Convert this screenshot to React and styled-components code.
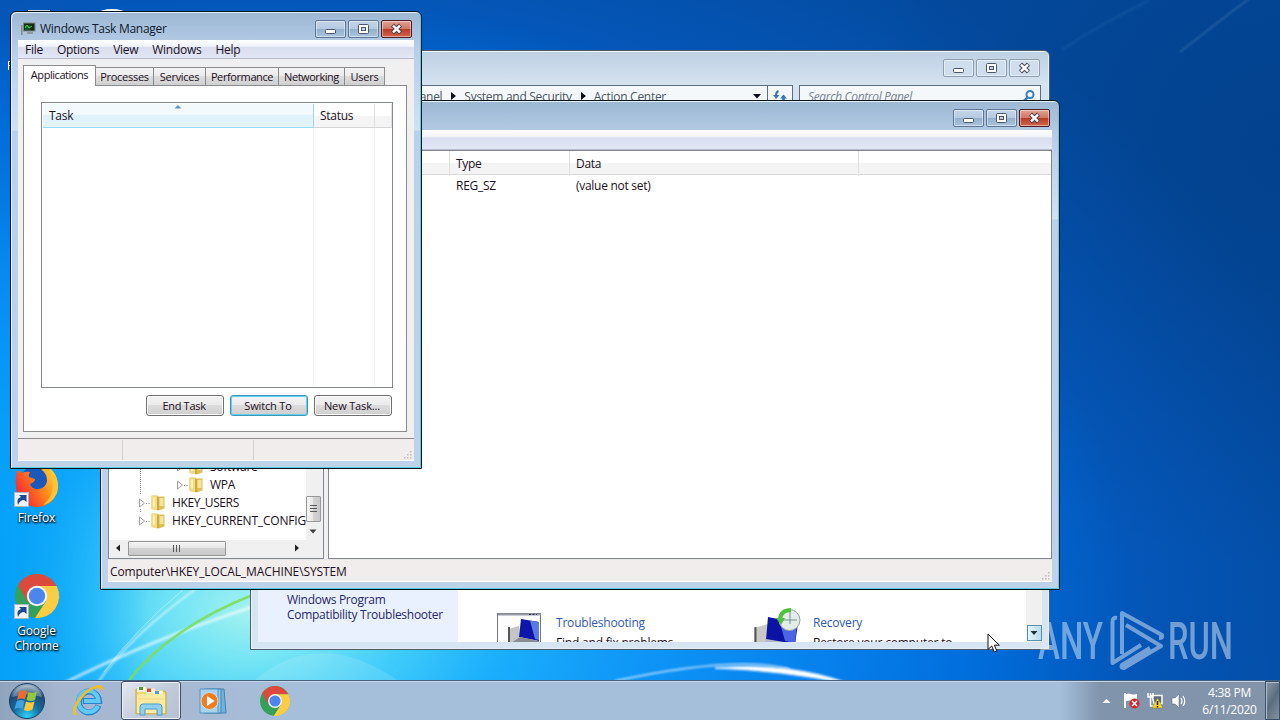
import React from 'react';
import styled, { createGlobalStyle, css } from 'styled-components';

const GlobalStyle = createGlobalStyle`
  * {
    box-sizing: border-box;
  }
  body {
    margin: 0;
    overflow: hidden;
    font-family: 'Open Sans', 'Noto Sans', sans-serif;
    font-size: 12px;
    letter-spacing: -0.28px;
    color: #1c1022;
  }
  svg {
    flex: none;
  }
`

const Desktop = styled.main`
  position: relative;
  display: flex;
  flex-direction: column;
  justify-content: flex-end;
  width: 1280px;
  height: 720px;
  overflow: hidden;
  background:
    radial-gradient(ellipse 420px 420px at 1280px 150px, rgba(0, 40, 90, 0.25), transparent),
    radial-gradient(ellipse 170px 420px at -20px 620px, rgba(0, 158, 248, 0.95), rgba(0, 158, 248, 0.6) 50%, transparent),
    radial-gradient(ellipse 1120px 780px at 250px 610px, #a4f2f0 0%, #78e6f4 6%, #40ccfa 14%, #1aaefc 23%, #0e94f6 36%, #0680ec 52%, #006cda 66%, #0456b8 79%, #034a9e 100%);
`

const Wallpaper = styled.svg`
  position: absolute;
  left: 0;
  top: 0;
`

/* ---- window chrome ---- */

const Window = styled.section`
  position: absolute;
  left: ${props => props.$x}px;
  top: ${props => props.$y}px;
  width: ${props => props.$w}px;
  height: ${props => props.$h}px;
  display: flex;
  flex-direction: column;
  padding: 0 7px 7px;
  border: 1px solid ${props => props.$active ? '#06121c' : '#4c5c6c'};
  border-radius: 6px 6px 0 0;
  background: linear-gradient(#9db8d4, #b9cfe8 40px, #cfe2f3 118px, #b9d1ea 119px, #bed2ea);
  box-shadow: inset 1px 1px 0 #e6f2fb, inset -1px -1px 0 #57d0e4;
  ${props => !props.$active && css`
    background: linear-gradient(#bdd0e2, #d6e3f0 34px, #d7e4f2);
    box-shadow: inset 1px 1px 0 #f1f6fb, inset -1px -1px 0 #e3edf6;
  `}
`

const TitleBar = styled.header`
  display: flex;
  align-items: flex-start;
  flex: none;
  height: ${props => props.$h}px;
  margin-right: -5px;
  padding: 8px 7px 0 2px;
`

const Caption = styled.div`
  display: flex;
  align-items: center;
  flex: 1;
  height: 17px;
  gap: 4px;
  color: #0d1a2c;
`

const Controls = styled.div`
  display: flex;
  gap: 2px;
`

const ControlButton = styled.div`
  display: flex;
  align-items: center;
  justify-content: center;
  width: 31px;
  height: 18px;
  border: 1px solid #5d7796;
  border-radius: 2px;
  background: linear-gradient(#c3d5e9, #b5cae1 48%, #93afcb 50%, #a9c4de);
  box-shadow: inset 0 0 0 1px rgba(255, 255, 255, 0.45);
  ${props => props.$close && css`
    border-color: #4d1c22;
    background: linear-gradient(#e2a294, #d27762 48%, #b93a24 50%, #d2644a);
  `}
  ${props => props.$faded && css`
    border-color: #8d9eb1;
    background: #cfdeec;
  `}
`

const Min = () => (
  <svg width="13" height="12"><rect x="1.5" y="6.5" width="10" height="4" rx="1" fill="#fff" stroke="#4b5766" /></svg>
)

const Max = () => (
  <svg width="13" height="12">
    <rect x="1.5" y="1.5" width="10" height="9" rx="1" fill="#fff" stroke="#4b5766" />
    <rect x="4.5" y="4.5" width="4" height="3" fill="#c5d3e2" stroke="#4b5766" />
  </svg>
)

const Close = () => (
  <svg width="13" height="12">
    <path d="M2.5 2.2 L10.5 9.8 M10.5 2.2 L2.5 9.8" stroke="#4b4450" strokeWidth="4.4" />
    <path d="M3 2.7 L10 9.3 M10 2.7 L3 9.3" stroke="#fff" strokeWidth="2.5" />
  </svg>
)

const WindowControls = ({ faded }) => (
  <Controls>
    <ControlButton $faded={faded}><Min /></ControlButton>
    <ControlButton $faded={faded}><Max /></ControlButton>
    <ControlButton $faded={faded} $close={!faded}><Close /></ControlButton>
  </Controls>
)

const MenuBar = styled.nav`
  display: flex;
  flex: none;
  height: ${props => props.$h}px;
  padding-left: 7px;
  gap: 14px;
  line-height: 19px;
  border-bottom: 1px solid #b6bccc;
  background: linear-gradient(#fff, #f0f3fa 35%, #d9deef 42%, #e2e6f5);
`

const StatusBar = styled.footer`
  display: flex;
  align-items: center;
  flex: none;
  position: relative;
  height: 23px;
  border-top: 1px solid ${props => props.$line || '#8b8b8b'};
  border-bottom: 1px solid #fff;
  background: #f1edec;
`

const StatusCell = styled.div`
  width: ${props => props.$w}px;
  height: 20px;
  border-right: 1px solid #cfcfcf;
`

const Grip = styled.svg`
  position: absolute;
  right: 1px;
  bottom: 0;
`

const ResizeGrip = () => (
  <Grip width="9" height="9" fill="#c2c0c0">
    <path d="M6 0h1.500v1.500h-1.500zM3 3h1.500v1.500h-1.500zM6 3h1.500v1.500h-1.500zM0 6h1.500v1.500h-1.500zM3 6h1.500v1.500h-1.500zM6 6h1.500v1.500h-1.500z" />
  </Grip>
)

/* ---- task manager ---- */

const TaskBody = styled.div`
  display: flex;
  flex-direction: column;
  flex: 1;
  padding: 6px 7px 6px 5px;
  background: #f0f0f0;
`

const Tabs = styled.div`
  display: flex;
  align-items: flex-end;
  height: 21px;
  margin-bottom: -1px;
  z-index: 1;
  font-size: 11px;
`

const Tab = styled.div`
  width: ${props => props.$w}px;
  height: 19px;
  line-height: 18px;
  text-align: center;
  white-space: nowrap;
  letter-spacing: ${props => props.$track || -0.28}px;
  border: 1px solid #8a8c90;
  border-left: none;
  background: linear-gradient(#f3f3f3, #ebebeb 48%, #dcdcdc 50%, #d0d0d0);
  ${props => props.$current && css`
    height: 21px;
    border-left: 1px solid #8a8c90;
    border-bottom: none;
    background: #fff;
  `}
`

const TabPanel = styled.div`
  display: flex;
  flex-direction: column;
  flex: 1;
  padding: 16px 14px 15px 17px;
  border: 1px solid #8a8c90;
  background: #fff;
`

const TaskList = styled.div`
  display: flex;
  width: 352px;
  height: 286px;
  padding: 1px;
  border: 1px solid #828790;
`

const ListColumn = styled.div`
  flex: none;
  width: ${props => props.$w}px;
  border-right: 1px solid #f1f1f1;
  &:last-child {
    border-right: none;
  }
`

const ColumnHead = styled.div`
  position: relative;
  height: 24px;
  margin-right: -1px;
  padding-left: 6px;
  line-height: 24px;
  border-right: 1px solid #e0e0e3;
  border-bottom: 1px solid #d6d6d8;
  background: linear-gradient(#fff 50%, #f4f4f5 52%);
  ${props => props.$sorted && css`
    border-right: 1px solid #96d9f9;
    border-bottom: 1px solid #96d9f9;
    background: linear-gradient(#f2fafe 45%, #dff2fc 50%, #e3f4fd);
  `}
`

const SortMark = styled.svg`
  position: absolute;
  left: 131px;
  top: 0;
`

const Buttons = styled.div`
  display: flex;
  justify-content: flex-end;
  gap: 6px;
  margin-top: 7px;
`

const Button = styled.div`
  width: 78px;
  height: 21px;
  padding-right: 2px;
  line-height: 20px;
  letter-spacing: ${props => props.$track || -0.15}px;
  text-align: center;
  font-size: 11px;
  border: 1px solid ${props => props.$focus ? '#3c98b8' : '#707070'};
  border-radius: 3px;
  background: linear-gradient(#f3f3f3, #ebebeb 48%, #dcdcdc 50%, #cfcfcf);
  box-shadow: inset 0 0 0 1px ${props => props.$focus ? '#5fd0f2' : '#fbfbfb'};
`

const tabs = [
  { title: 'Applications', width: 73, track: -0.45, current: true },
  { title: 'Processes', width: 58 },
  { title: 'Services', width: 52 },
  { title: 'Performance', width: 73, track: -0.4 },
  { title: 'Networking', width: 66, track: -0.45 },
  { title: 'Users', width: 40 },
]

const TaskManager = () => (
  <Window $active $x={10} $y={11} $w={412} $h={458}>
    <TitleBar $h={28}>
      <Caption>
        <svg width="16" height="14">
          <rect x="3.5" y="1" width="11.500" height="8" fill="#16281a" stroke="#7d8a80" />
          <path d="M5 3h5v5h-5z" fill="#0b5a1c" />
          <path d="M5 6l2-3 2 3 3-2" stroke="#4fce4f" fill="none" />
          <path d="M7 10h6v2h-6z" fill="#8d9c98" />
          <path d="M1 3h1.500v10h-1.500z" fill="#7f9088" />
        </svg>
        Windows Task Manager
      </Caption>
      <WindowControls />
    </TitleBar>
    <MenuBar $h={19}>
      {['File', 'Options', 'View', 'Windows', 'Help'].map(item => <span key={item}>{item}</span>)}
    </MenuBar>
    <TaskBody>
      <Tabs>
        {tabs.map(tab => (
          <Tab key={tab.title} $w={tab.width} $track={tab.track} $current={tab.current}>{tab.title}</Tab>
        ))}
      </Tabs>
      <TabPanel>
        <TaskList>
          <ListColumn $w={271}>
            <ColumnHead $sorted>
              Task
              <SortMark width="8" height="5"><path d="M0.5 4.5L4 1l3.500 3.500z" fill="#5f98b8" /></SortMark>
            </ColumnHead>
          </ListColumn>
          <ListColumn $w={61}><ColumnHead>Status</ColumnHead></ListColumn>
          <ListColumn $w={16}><ColumnHead /></ListColumn>
        </TaskList>
        <Buttons>
          <Button $track={-0.3}>End Task</Button>
          <Button $focus>Switch To</Button>
          <Button>New Task...</Button>
        </Buttons>
      </TabPanel>
    </TaskBody>
    <StatusBar>
      <StatusCell $w={105} />
      <StatusCell $w={131} />
      <ResizeGrip />
    </StatusBar>
  </Window>
)

/* ---- registry editor ---- */

const RegBody = styled.div`
  display: flex;
  flex: 1;
  min-height: 0;
  background: #f0f0f0;
`

const TreePane = styled.div`
  display: grid;
  grid-template-columns: 1fr 17px;
  grid-template-rows: 1fr 18px;
  width: 216px;
  border: 1px solid #828790;
  background: #fff;
`

const Tree = styled.div`
  display: flex;
  flex-direction: column;
  justify-content: flex-end;
  min-width: 0;
  padding-bottom: 11px;
  overflow: hidden;
`

const TreeRow = styled.div`
  display: flex;
  align-items: center;
  height: 18px;
  padding-left: ${props => props.$indent}px;
  white-space: nowrap;
`

const TreeLabel = styled.span`
  margin-left: 6px;
  letter-spacing: ${props => props.$track || -0.28}px;
`

const Folder = () => (
  <svg width="28" height="17">
    <path d="M1.500 5v8l5-4z" fill="#fff" stroke="#a0a0a0" />
    <path d="M8 9.500h5" stroke="#888" strokeDasharray="1 1.500" />
    <path d="M13.500 1.500h6l1 1h6v12l-6 2-7-1.500z" fill="#dcbf55" />
    <path d="M13.500 2h5.500v14l-5.500-1z" fill="#f1dc84" />
    <path d="M20 3v13" stroke="#b8963a" />
    <path d="M21.500 4h4v8h-4z" fill="#f5e59c" />
    <path d="M15 3.500h2v9h-2z" fill="#fbf2bc" />
  </svg>
)

const ScrollColumn = styled.div`
  display: flex;
  flex-direction: column;
  align-items: flex-start;
  justify-content: flex-end;
  background: #f0f0f0;
`

const ScrollRow = styled.div`
  display: flex;
  align-items: center;
  grid-column: 1;
  padding: 0 4px 2px 6px;
  background: #f0f0f0;
`

const Thumb = styled.div`
  display: flex;
  align-items: center;
  justify-content: center;
  width: ${props => props.$w}px;
  height: ${props => props.$h}px;
  border: 1px solid #979797;
  border-radius: 1px;
  background: linear-gradient(${props => props.$side ? 'to right' : 'to bottom'}, #f5f5f5, #e6e6e6 48%, #d2d2d3 50%, #c8c8ca);
`

const Corner = styled.div`
  background: #f0f0f0;
`

const Spacer = styled.div`
  flex: 1;
`

const ValueList = styled.div`
  flex: 1;
  margin-left: 4px;
  border: 1px solid #828790;
  background: #fff;
`

const ValueRow = styled.div`
  display: grid;
  grid-template-columns: 121px 120px 289px 1fr;
  height: 22px;
  line-height: 22px;
`

const ValueHead = styled(ValueRow)`
  height: 24px;
  line-height: 25px;
  border-bottom: 1px solid #d9d9db;
  background: linear-gradient(#fff 50%, #f4f4f5 52%);
`

const ValueCell = styled.span`
  padding-left: 6px;
  border-right: 1px solid ${props => props.$head ? '#dedee1' : 'transparent'};
  &:last-child {
    border-right: none;
  }
`

const StatusText = styled.span`
  padding: 2px 0 0 2px;
  letter-spacing: -0.1px;
  line-height: 21px;
`

const treeRows = [
  { label: 'Software', indent: 67 },
  { label: 'WPA', indent: 67 },
  { label: 'HKEY_USERS', indent: 29, track: -0.4 },
  { label: 'HKEY_CURRENT_CONFIG', indent: 29, track: -0.2 },
]

const TreeGuide = styled.svg`
  position: absolute;
  left: 38px;
  top: 360px;
`

const RegistryEditor = () => (
  <Window $active $x={100} $y={100} $w={960} $h={490}>
    <TitleBar $h={29}>
      <Caption />
      <WindowControls />
    </TitleBar>
    <MenuBar $h={20} />
    <RegBody>
      <TreePane>
        <Tree>
          {treeRows.map(row => (
            <TreeRow key={row.label} $indent={row.indent}>
              <Folder />
              <TreeLabel $track={row.track}>{row.label}</TreeLabel>
            </TreeRow>
          ))}
        </Tree>
        <ScrollColumn>
          <Thumb $side $w={15} $h={26}>
            <svg width="7" height="9"><path d="M0 .5h7M0 3.500h7M0 6.500h7" stroke="#555" /></svg>
          </Thumb>
          <svg width="15" height="18"><path d="M3.500 7.500h7l-3.500 4z" fill="#404040" /></svg>
        </ScrollColumn>
        <ScrollRow>
          <svg width="13" height="8"><path d="M5 0.500v7l-4-3.500z" fill="#202020" /></svg>
          <Thumb $w={98} $h={15}>
            <svg width="9" height="7"><path d="M.5 0v7M3.500 0v7M6.500 0v7" stroke="#555" /></svg>
          </Thumb>
          <Spacer />
          <svg width="8" height="8"><path d="M1 0.500v7l4-3.500z" fill="#202020" /></svg>
        </ScrollRow>
        <Corner />
      </TreePane>
      <TreeGuide width="4" height="52">
        <path d="M1.500 0v33M1.500 48v4" stroke="#8c8c8c" strokeDasharray="1 1" />
      </TreeGuide>
      <ValueList>
        <ValueHead>
          <ValueCell $head />
          <ValueCell $head>Type</ValueCell>
          <ValueCell $head>Data</ValueCell>
          <ValueCell />
        </ValueHead>
        <ValueRow>
          <ValueCell />
          <ValueCell>REG_SZ</ValueCell>
          <ValueCell>(value not set)</ValueCell>
        </ValueRow>
      </ValueList>
    </RegBody>
    <StatusBar $line="#e6e6e6">
      <StatusText>Computer\HKEY_LOCAL_MACHINE\SYSTEM</StatusText>
      <ResizeGrip />
    </StatusBar>
  </Window>
)

/* ---- action center ---- */

const AddressRow = styled.div`
  display: flex;
  flex: none;
  justify-content: flex-end;
  gap: 6px;
  height: 22px;
  margin-bottom: 8px;
  padding-right: 1px;
`

const AddressBox = styled.div`
  display: flex;
  align-items: center;
  width: ${props => props.$w}px;
  border: 1px solid #5f6e7e;
  background: #f4f8fb;
  color: #4d5661;
`

const Crumb = styled.span`
  margin-right: 9px;
  white-space: nowrap;
`

const Arrow = styled.svg`
  margin-right: 8px;
`

const Refresh = styled.div`
  display: flex;
  align-items: center;
  justify-content: center;
  width: 25px;
  height: 100%;
  margin-left: 6px;
  border-left: 1px solid #5f6e7e;
`

const Placeholder = styled.em`
  flex: 1;
  padding-left: 8px;
  letter-spacing: -0.35px;
  color: #7b858f;
`

const PanelBody = styled.div`
  display: flex;
  flex: 1;
  background: #fff;
`

const Side = styled.aside`
  display: flex;
  flex-direction: column;
  justify-content: flex-end;
  width: 200px;
  padding: 0 0 20px 29px;
  line-height: 15px;
  white-space: nowrap;
  color: #27276b;
  background: #eaf1fe;
`

const PanelMain = styled.div`
  display: flex;
  flex: 1;
  align-items: flex-end;
`

const Tile = styled.div`
  display: flex;
  width: ${props => props.$w}px;
  height: 36px;
  padding-top: 7px;
  overflow: hidden;
  line-height: 20px;
  white-space: nowrap;
`

const TileText = styled.div`
  letter-spacing: -0.2px;
`

const TileIcon = styled.svg`
  margin-right: 10px;
  overflow: visible;
`

const TileTitle = styled.div`
  color: #2f58b8;
`

const PanelScroll = styled.div`
  display: flex;
  align-items: flex-end;
  justify-content: center;
  width: 16px;
  padding-bottom: 1px;
  background: #f0f0f0;
`

const ScrollButton = styled.div`
  display: flex;
  align-items: center;
  justify-content: center;
  width: 15px;
  height: 16px;
  border: 1px solid #5b8fae;
  background: linear-gradient(to right, #e6f4fa, #b6dcec);
`

const CrumbArrow = () => (
  <Arrow width="5" height="8"><path d="M0 0v8l5-4z" fill="#101018" /></Arrow>
)

const ActionCenter = () => (
  <Window $x={250} $y={50} $w={800} $h={600}>
    <TitleBar $h={34}>
      <Caption />
      <WindowControls faded />
    </TitleBar>
    <AddressRow>
      <AddressBox $w={439}>
        <Spacer />
        <Crumb>Control Panel</Crumb>
        <CrumbArrow />
        <Crumb>System and Security</Crumb>
        <CrumbArrow />
        <Crumb>Action Center</Crumb>
        <svg width="86" height="6"><path d="M78 1h8l-4 4.500z" fill="#05051a" /></svg>
        <Refresh>
          <svg width="14" height="12">
            <path d="M5.500 1q-2.500 1-2.500 5" stroke="#3a78b4" strokeWidth="2" fill="none" />
            <path d="M0 5h6.500l-3.300 4z" fill="#3a78b4" />
            <path d="M10.500 11v-3" stroke="#3a78b4" strokeWidth="2.500" />
            <path d="M7 8.500h7l-3.500-4z" fill="#3a78b4" />
          </svg>
        </Refresh>
      </AddressBox>
      <AddressBox $w={242}>
        <Placeholder>Search Control Panel</Placeholder>
        <svg width="18" height="14">
          <circle cx="8" cy="5.500" r="3.500" fill="none" stroke="#3c7fc0" strokeWidth="2" />
          <path d="M5.500 8.500l-4 4" stroke="#3c7fc0" strokeWidth="2.500" />
        </svg>
      </AddressBox>
    </AddressRow>
    <PanelBody>
      <Side>
        <span>Windows Program</span>
        <span>Compatibility Troubleshooter</span>
      </Side>
      <PanelMain>
        <Spacer />
        <Tile $w={257}>
          <TileIcon width="49" height="45">
            <rect x="0.5" y="0.5" width="43" height="50" fill="#fdfdfe" stroke="#73747c" />
            <path d="M1 1.500h43" stroke="#9a9ca4" strokeWidth="2" />
            <path d="M32 1.500h8" stroke="#2b2b60" strokeDasharray="2 1.500" />
            <path d="M11 16l11-3 2 20H11z" fill="#c4c5c6" />
            <path d="M12 14v18" stroke="#555" strokeWidth="2" />
            <path d="M24 6l18 3v19l-20-4z" fill="#0d16a8" />
            <path d="M33 7.500l9 1.500v18l-4-1z" fill="#5b7ae8" />
            <path d="M14 30l9-6 19 4v6z" fill="#8b8d94" />
          </TileIcon>
          <TileText>
            <TileTitle>Troubleshooting</TileTitle>
            <div>Find and fix problems</div>
          </TileText>
        </Tile>
        <Tile $w={272}>
          <TileIcon width="49" height="45">
            <path d="M0 15l14-4v20H0z" fill="#c9c8c4" />
            <path d="M1.500 14v18" stroke="#55565a" strokeWidth="2" />
            <path d="M14 4l30 6-3 22-29-5z" fill="#0c12a4" />
            <path d="M26 10l17 2-2 18-10-2z" fill="#4c63e2" />
            <path d="M12 26l30 5v5H9z" fill="#b4b7c4" />
            <circle cx="35.500" cy="7" r="10.500" fill="#e4ecea" stroke="#8ea2a2" />
            <path d="M36 -1v12M28 7h15" stroke="#7a8d90" />
            <path d="M37 -3q-10 0-11 9" fill="none" stroke="#4fc23c" strokeWidth="4" />
            <path d="M22 5h9l-4 7z" fill="#4fc23c" />
          </TileIcon>
          <TileText>
            <TileTitle>Recovery</TileTitle>
            <div>Restore your computer to</div>
          </TileText>
        </Tile>
      </PanelMain>
      <PanelScroll>
        <ScrollButton>
          <svg width="8" height="5"><path d="M0.500 0h7l-3.500 4z" fill="#1f3340" /></svg>
        </ScrollButton>
      </PanelScroll>
    </PanelBody>
  </Window>
)

/* ---- desktop shortcuts ---- */

const Shortcut = styled.div`
  position: absolute;
  left: 0;
  top: ${props => props.$y}px;
  display: flex;
  flex-direction: column;
  align-items: center;
  width: 73px;
  gap: 3px;
  line-height: 15px;
  letter-spacing: -0.15px;
  text-align: center;
  color: #fff;
  text-shadow: 0 1px 2px #000, 1px 1px 2px #000;
`

const ShortcutArrow = () => (
  <g>
    <rect x="-0.500" y="30.500" width="14" height="14" fill="#f0f4fa" stroke="#a8b8c8" />
    <path d="M3 43q-2-7 3-8l-2-2h7.500v7l-2.500-2q-4 0-6 5z" fill="#1c4a92" />
  </g>
)

const ChromeMark = () => (
  <g>
    <circle cx="22" cy="22" r="22" fill="#34a05a" />
    <path d="M22 22L3.500 10A22 22 0 0 1 41.500 12H22z" fill="#db4a3c" />
    <path d="M3 11L13 28L22 22V12z" fill="#db4a3c" />
    <path d="M22 12H41.700A22 22 0 0 1 20 44L31 27z" fill="#fccd42" />
    <circle cx="22" cy="22" r="10.200" fill="#f4f4f4" />
    <circle cx="22" cy="22" r="8.200" fill="#4a86ee" />
  </g>
)

const FirefoxShortcut = () => (
  <Shortcut $y={462}>
    <svg width="44" height="45" overflow="visible">
      <defs>
        <linearGradient id="fox" x1="0" y1="0.800" x2="1" y2="0.200">
          <stop offset="0" stopColor="#f8163c" />
          <stop offset="0.500" stopColor="#ff7a1c" />
          <stop offset="1" stopColor="#ffdc3a" />
        </linearGradient>
      </defs>
      <circle cx="22" cy="20" r="17" fill="#1b58b8" />
      <path d="M2 9q3-1 5 2q3-2 8-1q-2 3-1 5l6 2q0 3-5 5q1 5 8 5q8-1 9-8q0-7-5-11q-3-3-3-7q6 0 10 5q8 5 9 17a21 21 0 0 1-42 2q-1-9 1-16z" fill="url(#fox)" />
      <path d="M34 5q12 11 8 26q-5 10-14 12q10-8 10-20q0-9-5-17z" fill="#ffc430" />
      <ShortcutArrow />
    </svg>
    Firefox
  </Shortcut>
)

const ChromeShortcut = () => (
  <Shortcut $y={574}>
    <svg width="44" height="46" overflow="visible"><ChromeMark /><ShortcutArrow /></svg>
    <span>Google<br />Chrome</span>
  </Shortcut>
)

/* ---- taskbar ---- */

const Bar = styled.footer`
  position: relative;
  display: flex;
  align-items: stretch;
  height: 40px;
  border-top: 1px solid #41617e;
  box-shadow: inset 0 1px 0 #c7d6e6;
  background: linear-gradient(to right, #8fa3bd, #a5b6cf 60px, #a7b9d3 180px, #a5bfdb 300px, #a5bfdb 1060px, #8094ab 1100px, #8394aa);
`

const BarItem = styled.div`
  display: flex;
  align-items: center;
  justify-content: center;
  width: ${props => props.$w}px;
  ${props => props.$open && css`
    border: 1px solid #3f5068;
    border-radius: 3px;
    background: linear-gradient(135deg, #e3e8ef, #c3cddb 50%, #b3c1d3);
    box-shadow: inset 0 0 0 1px #eef2f7;
  `}
`

const Tray = styled.div`
  display: flex;
  align-items: center;
  gap: 7px;
  margin-right: 7px;
`

const TrayChevron = styled.svg`
  margin-right: 5px;
`

const Clock = styled.div`
  display: flex;
  flex-direction: column;
  justify-content: center;
  width: 70px;
  padding-right: 1px;
  line-height: 17px;
  text-align: center;
  color: #fff;
`

const ShowDesktop = styled.div`
  width: 15px;
  border: 1px solid #38506a;
  background: linear-gradient(120deg, #8a9aab, #5a6d80 50%, #8493a3);
  box-shadow: inset 1px 1px 0 #aebccb;
`

const StartOrb = () => (
  <svg width="38" height="38">
    <defs>
      <radialGradient id="orb" cx="0.500" cy="0.950" r="0.900">
        <stop offset="0" stopColor="#2fd3f7" />
        <stop offset="0.450" stopColor="#146a9e" />
        <stop offset="0.800" stopColor="#1d4a72" />
        <stop offset="1" stopColor="#8fa9bf" />
      </radialGradient>
    </defs>
    <circle cx="19" cy="19" r="17.500" fill="url(#orb)" stroke="#1e3e5c" />
    <path d="M4 15a15.500 15.500 0 0 1 30 0q-15-5-30 0z" fill="#fff" opacity="0.300" />
    <path d="M11 10q4-3 8-.5l-2 8q-4-2-8 .5z" fill="#ee6a30" />
    <path d="M20.500 10q4 2 8.500-.5l-2 8.500q-4 2-8.500 0z" fill="#93c83e" />
    <path d="M8.500 19.500q4-2.500 8-.5l-2 8q-4-2-8 .5z" fill="#3fa0e6" />
    <path d="M18 19.500q4 2 8.500 0l-2 8q-4 2.500-8.500 .5z" fill="#fcc93a" />
  </svg>
)

const Explorer = () => (
  <svg width="32" height="30">
    <path d="M1 3h8l2 2h18q2 0 2 2v21H1z" fill="#f0d573" stroke="#c9a64a" />
    <path d="M2 1h9v5H2zM11 2.500h9v5h-9zM19 4.500h9v5h-9z" fill="#f6f2dc" />
    <path d="M4 1h4v3H4z" fill="#4c9b4c" />
    <path d="M12 2.500h4v3.500h-4z" fill="#e0482c" />
    <path d="M20 5h4v3h-4z" fill="#4a9ed2" />
    <path d="M2 8h28v19H2z" fill="#fae9a0" />
    <path d="M3 13h26" stroke="#efd887" />
    <path d="M5 29v-8q0-3 3-3h16q3 0 3 3v8h-5v-6H10v6z" fill="#8fd0f0" stroke="#4a9cd0" />
  </svg>
)

const InternetExplorer = () => (
  <svg width="32" height="34">
    <path d="M26.500 21.500q-3 7-10 7a10 10.500 0 1 1 10.500-11.500H11" fill="none" stroke="#2585cc" strokeWidth="6" />
    <path d="M26 22q-3 6-9.500 6a10 10.500 0 1 1 10-11H12" fill="none" stroke="#62c8f4" strokeWidth="4.200" />
    <path d="M4 31q-4-5 3-15T24 3q6-2 6 3" fill="none" stroke="#f0be28" strokeWidth="2.800" />
  </svg>
)

const MediaPlayer = () => (
  <svg width="29" height="26">
    <path d="M8 1h17l2 24H8z" fill="#6fb2dc" stroke="#4784b4" />
    <path d="M5 1h17v24H5z" fill="#8cc6e8" stroke="#4784b4" />
    <path d="M1 1h18v24H1z" fill="#a4d4f0" stroke="#5a94c0" />
    <circle cx="10.500" cy="13" r="8.500" fill="#ef7d22" stroke="#d9d9d9" />
    <path d="M8 8v10l7.500-5z" fill="#fff" />
  </svg>
)

const Taskbar = () => (
  <Bar>
    <BarItem $w={54}><StartOrb /></BarItem>
    <BarItem $w={67}><InternetExplorer /></BarItem>
    <BarItem $w={60} $open><Explorer /></BarItem>
    <BarItem $w={64}><MediaPlayer /></BarItem>
    <BarItem $w={60}>
      <svg width="30" height="30" viewBox="0 0 44 44"><ChromeMark /></svg>
    </BarItem>
    <Spacer />
    <Tray>
      <TrayChevron width="9" height="6"><path d="M.5 5h8l-4-4z" fill="#fff" /></TrayChevron>
      <svg width="17" height="17">
        <path d="M2 1v15" stroke="#fff" strokeWidth="2" />
        <path d="M3 2q3-1 5 0t6 0v7q-3 1-5 0t-6 0z" fill="#fff" />
        <circle cx="11.500" cy="11.500" r="5" fill="#d3262c" />
        <path d="M9 9l5 5M14 9l-5 5" stroke="#fff" strokeWidth="1.500" />
      </svg>
      <svg width="17" height="17">
        <path d="M5 3.500h10v8H7z" fill="#5a6c82" stroke="#fff" strokeWidth="1.500" />
        <path d="M1 1v4h5V1M3.500 1v13h5" fill="none" stroke="#fff" strokeWidth="1.500" />
        <path d="M10.500 6l5.500 10H5z" fill="#f6d632" stroke="#8a7610" strokeWidth="0.500" />
        <path d="M10.500 9v4M10.500 14v1.500" stroke="#222" strokeWidth="1.500" />
      </svg>
      <svg width="17" height="16">
        <path d="M1 5h3l4-4v14l-4-4H1z" fill="#fff" stroke="#55657a" strokeWidth="0.500" />
        <path d="M10 5q2 3 0 6M12 3q3.500 5 0 10" fill="none" stroke="#fff" strokeWidth="1.200" />
      </svg>
    </Tray>
    <Clock>
      <span>4:38 PM</span>
      <span>6/11/2020</span>
    </Clock>
    <ShowDesktop />
  </Bar>
)

/* ---- overlays ---- */

const Watermark = styled.svg`
  position: absolute;
  left: 1036px;
  top: 608px;
  opacity: 0.5;
  overflow: visible;
  letter-spacing: 0;
`

const Cursor = styled.svg`
  position: absolute;
  left: 987px;
  top: 633px;
`

const App = () => (
  <>
    <GlobalStyle />
    <Desktop>
      <Wallpaper width="1280" height="720" fill="none">
        <defs>
          <filter id="soft"><feGaussianBlur stdDeviation="1" /></filter>
        </defs>
        <ellipse cx="112" cy="13" rx="13" ry="4" fill="#fff" />
        <path d="M28 10.500h22" stroke="#c8d4e0" />
        <path d="M8.500 61v9M8 61.500h3M8 65.500h3" stroke="#fff" />
        <path d="M1180 52Q1215 24 1250 -2" stroke="#5c8fc0" strokeWidth="1.500" opacity="0.500" filter="url(#soft)" />
        <path d="M1062 50Q1100 24 1150 0" stroke="#3474b4" strokeWidth="3" opacity="0.200" filter="url(#soft)" />
        <path d="M60 685Q150 640 255 606" stroke="#fff" strokeWidth="3" opacity="0.600" filter="url(#soft)" />
        <path d="M96 685Q130 635 200 586" stroke="#fff" strokeWidth="1.800" opacity="0.600" filter="url(#soft)" />
        <path d="M104 672Q135 630 185 588" stroke="#fff" strokeWidth="1" opacity="0.400" />
        <path d="M126 684Q168 628 255 594" stroke="#7ddc5c" strokeWidth="2.600" opacity="0.900" />
        <path d="M255 680Q320 625 400 682z" fill="#fff" opacity="0.120" />
        <path d="M615 681Q735 655 790 669" stroke="#fff" strokeWidth="1.800" opacity="0.650" filter="url(#soft)" />
        <path d="M715 668Q790 662 850 684Q780 670 715 668z" fill="#fff" stroke="#fff" strokeWidth="1" filter="url(#soft)" />
      </Wallpaper>
      <FirefoxShortcut />
      <ChromeShortcut />
      <ActionCenter />
      <RegistryEditor />
      <TaskManager />
      <Taskbar />
      <Watermark width="204" height="66">
        <g fill="#dfeaf8" fontFamily="Roboto" fontWeight="500" fontSize="52">
          <text x="2" y="51" textLength="65" lengthAdjust="spacingAndGlyphs">ANY</text>
          <text x="132" y="51" textLength="65" lengthAdjust="spacingAndGlyphs">RUN</text>
        </g>
        <g fill="none" stroke="#dfeaf8" strokeWidth="4" strokeLinejoin="round">
          <path d="M81 10Q76.500 9 76.500 14V55L105 37" />
          <path d="M86 46V5L126 27Q127 30 123 30" />
          <path d="M90 17L125 38L88 60Q84 60 86 57L114 40" />
        </g>
      </Watermark>
      <Cursor width="14" height="21">
        <path d="M1 1v15.500l3.700-3.500 2.600 6 2.600-1.200-2.600-5.600h5z" fill="#fff" stroke="#111" />
      </Cursor>
    </Desktop>
  </>
)

export default App
